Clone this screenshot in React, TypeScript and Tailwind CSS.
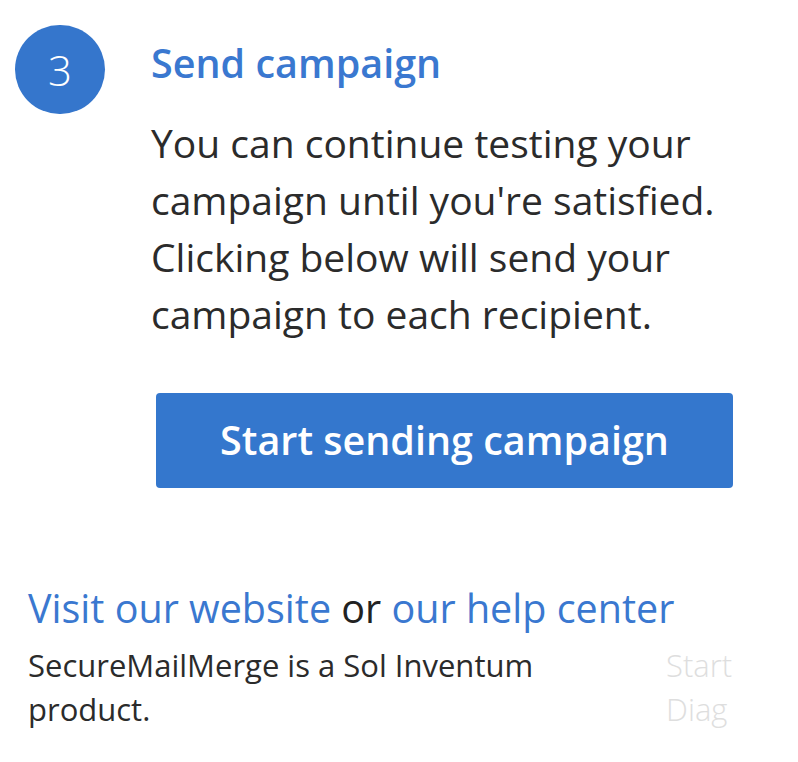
import React from "react";

export default function App() {
  const font = { fontFamily: '"Open Sans", "Noto Sans", sans-serif' };
  return (
    <div className="w-[798px] h-[762px] bg-white overflow-hidden relative" style={font}>
      <div className="flex pt-[25px] pl-[15px]">
        <div className="w-[90px] h-[89px] rounded-full bg-[#3576cc] flex items-center justify-center text-white text-[42px] font-light leading-none shrink-0">
          3
        </div>
        <div className="ml-[46px] flex flex-col">
          <div className="text-[#3a78d0] text-[39.5px] font-semibold leading-[56px] mt-[10px] whitespace-nowrap">
            Send campaign
          </div>
          <div className="text-[#2b2b2b] text-[39px] leading-[57px] mt-[23px] whitespace-nowrap">
            <div>You can continue testing your</div>
            <div>campaign until you're satisfied.</div>
            <div>Clicking below will send your</div>
            <div>campaign to each recipient.</div>
          </div>
          <button className="ml-[5px] mt-[51px] w-[577px] h-[95px] rounded-[4px] bg-[#3477cd] text-white text-[39.5px] font-semibold flex items-center justify-center">
            Start sending campaign
          </button>
        </div>
      </div>
      <div className="pl-[28px] mt-[95px]">
        <div className="text-[39.5px] leading-[50px] whitespace-nowrap">
          <span className="text-[#3a78d0]">Visit our website</span>{" "}
          <span className="text-[#222]">or</span>{" "}
          <span className="text-[#3a78d0]">our help center</span>
        </div>
        <div className="flex mt-[10px]">
          <div className="w-[638px] text-[#2b2b2b] text-[31px] leading-[44px]">
            <div>SecureMailMerge is a Sol Inventum</div>
            <div>product.</div>
          </div>
          <div className="text-[#dedede] text-[31px] font-light leading-[44px]">
            <div>Start</div>
            <div>Diag</div>
          </div>
        </div>
      </div>
    </div>
  );
}
